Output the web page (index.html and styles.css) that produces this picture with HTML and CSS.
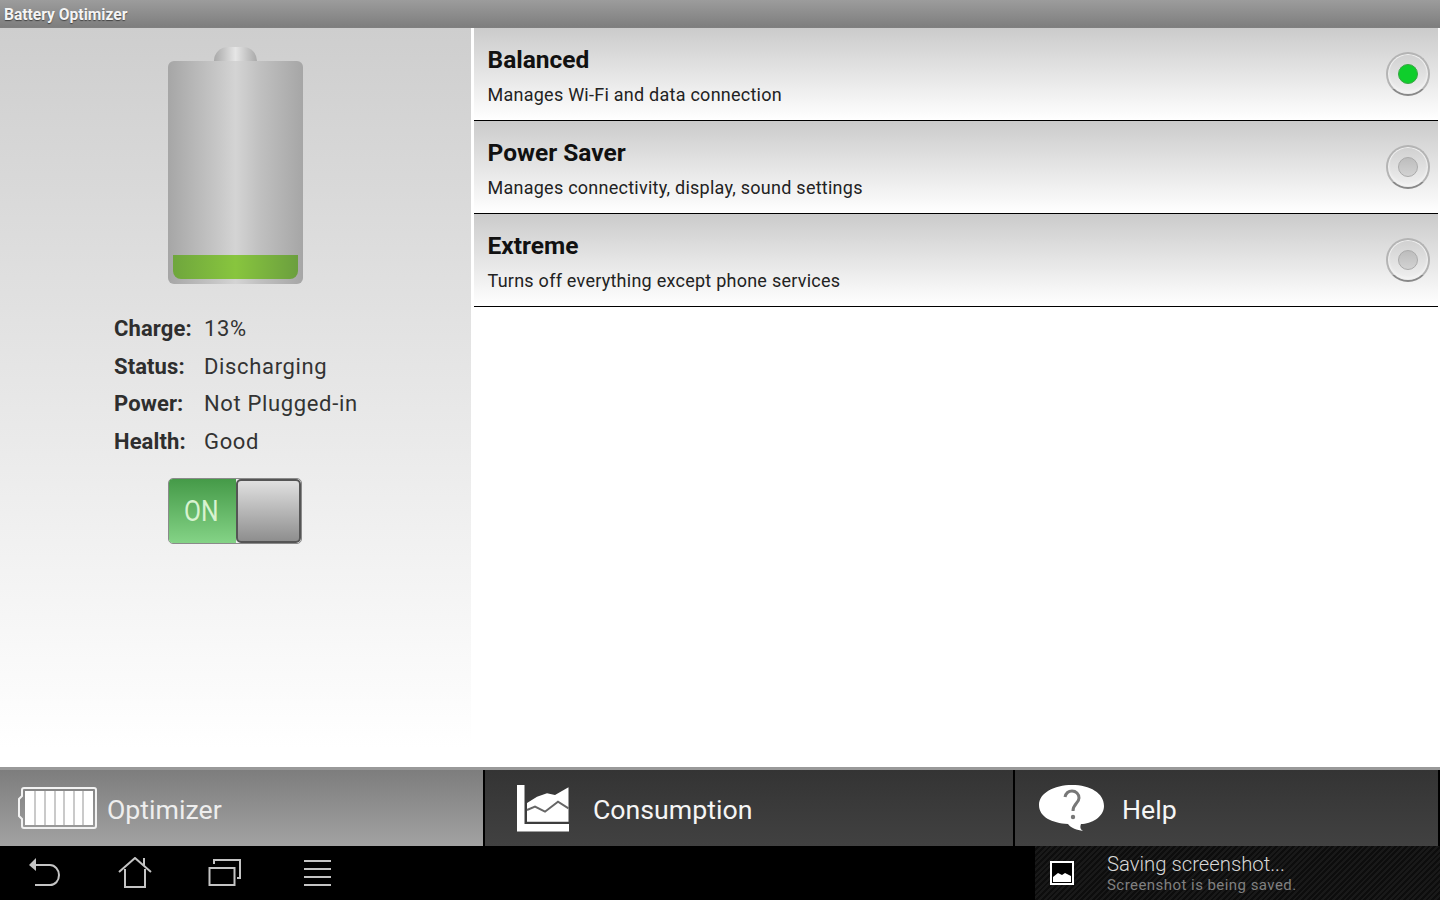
FILE: index.html
```html
<!DOCTYPE html>
<html lang="en">
<head>
    <meta charset="UTF-8">
    <meta name="viewport" content="width=device-width, initial-scale=1.0">
    <title>Battery Optimizer</title>
    <link rel="stylesheet" href="styles.css">
</head>
<body>
    <div class="titlebar"><span class="app-title">Battery Optimizer</span></div>

    <div class="main">
        <div class="side">
            <div class="battery">
                <div class="battery-cap"></div>
                <div class="battery-body">
                    <div class="battery-fill"></div>
                </div>
            </div>
            <div class="stats">
                <div class="stat"><span class="stat-label">Charge:</span><span class="stat-value">13%</span></div>
                <div class="stat"><span class="stat-label">Status:</span><span class="stat-value">Discharging</span></div>
                <div class="stat"><span class="stat-label">Power:</span><span class="stat-value">Not Plugged-in</span></div>
                <div class="stat"><span class="stat-label">Health:</span><span class="stat-value">Good</span></div>
            </div>
            <div class="toggle">
                <div class="toggle-on"><span>ON</span></div>
                <div class="toggle-knob"></div>
            </div>
        </div>

        <div class="modes">
            <div class="mode">
                <div class="mode-text">
                    <div class="mode-name">Balanced</div>
                    <div class="mode-desc">Manages Wi-Fi and data connection</div>
                </div>
                <div class="radio"><div class="radio-dot active"></div></div>
            </div>
            <div class="mode">
                <div class="mode-text">
                    <div class="mode-name">Power Saver</div>
                    <div class="mode-desc">Manages connectivity, display, sound settings</div>
                </div>
                <div class="radio"><div class="radio-dot"></div></div>
            </div>
            <div class="mode">
                <div class="mode-text">
                    <div class="mode-name">Extreme</div>
                    <div class="mode-desc">Turns off everything except phone services</div>
                </div>
                <div class="radio"><div class="radio-dot"></div></div>
            </div>
        </div>
    </div>

    <div class="tabs">
        <div class="tab tab-optimizer">
            <svg class="icon-battery" width="80" height="44" viewBox="0 0 80 44">
                <path d="M6 2H76a2 2 0 0 1 2 2V40a2 2 0 0 1-2 2H6a2 2 0 0 1-2-2V33L1 30V13L4 10V4a2 2 0 0 1 2-2z" fill="none" stroke="#f2f2f2" stroke-width="2"/>
                <rect x="7" y="5" width="68" height="34" fill="#fff"/>
                <path d="M17 5V39M27 5V39M37 5V39M46 5V39M56 5V39M65 5V39" stroke="#b4b4b4" stroke-width="1.4"/>
            </svg>
            <span class="tab-label">Optimizer</span>
        </div>
        <div class="tab tab-consumption">
            <svg width="52" height="48" viewBox="0 0 52 48">
                <path d="M0 1H7.500V40H52V47.500H0z" fill="#fff"/>
                <path d="M10 19L20 12.700L30 9.300L38 11L51.500 3.300V37.700H10z" fill="#fff"/>
                <path d="M10 26L18 22.700L28 27.700L41 17.700L51.500 24.300" fill="none" stroke="#666" stroke-width="2"/>
            </svg>
            <span class="tab-label">Consumption</span>
        </div>
        <div class="tab tab-help">
            <svg width="68" height="48" viewBox="0 0 68 48">
                <path d="M34 1C52 1 66 9 66 22C66 33 53 40 43 40C42 43 42 45 45 47C39 46 33 44 30 40C14 39 1 33 1 21C1 9 16 1 34 1z" fill="#fff"/>
                <path d="M27 13C28 9 31 7 34 7C38 7 41 10 41 14C41 19 35 20 35 27" fill="none" stroke="#777" stroke-width="3"/>
                <circle cx="35" cy="33" r="2.200" fill="#777"/>
            </svg>
            <span class="tab-label">Help</span>
        </div>
    </div>

    <div class="navbar">
        <div class="nav-icons">
            <svg width="34" height="32" viewBox="0 0 34 32">
                <path d="M5 8H22C27 8 31 13 31 18C31 24 27 28 22 28H7" fill="none" stroke="#c4c4c4" stroke-width="2"/>
                <path d="M1 8L8 1V14z" fill="#c4c4c4"/>
            </svg>
            <svg width="34" height="32" viewBox="0 0 34 32">
                <path d="M1 15L17 1L33 15M7 12V30H27V12M26 9V1" fill="none" stroke="#c4c4c4" stroke-width="2"/>
            </svg>
            <svg width="34" height="30" viewBox="0 0 34 30">
                <rect x="1.500" y="10" width="25" height="17" fill="none" stroke="#c4c4c4" stroke-width="2"/>
                <path d="M6 6V2H32V20H29" fill="none" stroke="#c4c4c4" stroke-width="2"/>
            </svg>
            <svg class="nav-menu" width="30" height="28" viewBox="0 0 30 28">
                <path d="M1 2H28M1 10H28M1 18H28M1 26H28" stroke="#c4c4c4" stroke-width="2"/>
            </svg>
        </div>
        <div class="notify">
            <svg width="24" height="24" viewBox="0 0 24 24">
                <rect x="1" y="1" width="22" height="22" fill="#000" stroke="#fff" stroke-width="2"/>
                <path d="M3 21V16L8 12L12 14L15 12L21 15V21z" fill="#fff"/>
            </svg>
            <div class="notify-text">
                <div class="notify-title">Saving screenshot...</div>
                <div class="notify-sub">Screenshot is being saved.</div>
            </div>
        </div>
    </div>
</body>
</html>
```

FILE: styles.css
```css
* {
    box-sizing: border-box;
}

body {
    font-family: Roboto, "Liberation Sans", sans-serif;
    margin: 0;
    width: 1440px;
    height: 900px;
    overflow: hidden;
    display: flex;
    flex-direction: column;
    background-color: white;
}

.titlebar {
    height: 28px;
    flex-shrink: 0;
    padding-left: 4px;
    line-height: 30px;
    background: linear-gradient(#9c9c9c, #7e7e7e);
    border-bottom: 1px solid #808080;
}

.app-title {
    font-size: 15.6px;
    font-weight: 700;
    color: #f4f4f4;
    text-shadow: 0 1px 1px rgba(0, 0, 0, 0.5);
}

.main {
    height: 739px;
    flex-shrink: 0;
    display: flex;
}

.side {
    width: 471px;
    height: 720px;
    flex-shrink: 0;
    padding-top: 19px;
    display: flex;
    flex-direction: column;
    align-items: center;
    background: linear-gradient(#cecece, #ffffff);
}

.battery {
    width: 135px;
    display: flex;
    flex-direction: column;
    align-items: center;
}

.battery-cap {
    width: 43px;
    height: 14px;
    border-radius: 14px 14px 0 0;
    background: linear-gradient(90deg, #a9a9a9, #e6e6e6 50%, #a9a9a9);
}

.battery-body {
    width: 135px;
    height: 223px;
    padding: 0 5px 5px;
    display: flex;
    align-items: flex-end;
    border-radius: 6px;
    background: linear-gradient(90deg, #a6a6a6, #c8c8c8 38%, #d4d4d4 50%, #c0c0c0 68%, #a6a6a6);
}

.battery-fill {
    width: 100%;
    height: 24px;
    border-radius: 0 0 8px 8px;
    background: linear-gradient(90deg, #6fa63d, #88c53e 50%, #6b9f3e);
}

.stats {
    width: 100%;
    margin-top: 26px;
    padding-left: 114px;
}

.stat {
    height: 37.5px;
    line-height: 37.5px;
    display: flex;
    font-size: 22px;
    color: #333;
}

.stat-label {
    width: 90px;
    font-weight: 700;
    letter-spacing: 0.1px;
    color: #2e2e2e;
}

.stat-value {
    letter-spacing: 0.65px;
}

.toggle {
    width: 134px;
    height: 66px;
    margin-top: 18px;
    margin-right: 1px;
    display: flex;
    border-radius: 5px;
    overflow: hidden;
    border: 1px solid #8a8a8a;
}

.toggle-on {
    width: 67px;
    padding-right: 2px;
    display: flex;
    align-items: center;
    justify-content: center;
    background: linear-gradient(#459a48, #84d386);
}

.toggle-on span {
    font-size: 29px;
    color: #d8f3d0;
    transform: scaleX(0.85);
}

.toggle-knob {
    flex: 1;
    border: 2px solid #555;
    border-radius: 5px;
    background: linear-gradient(#e0e0e0, #8e8e8e);
}

.modes {
    width: 964px;
    margin-left: 3px;
}

.mode {
    height: 93px;
    display: flex;
    align-items: center;
    justify-content: space-between;
    padding: 0 8px 0 13.5px;
    border-bottom: 1px solid #000;
    background: linear-gradient(#cbcbcb, #ffffff);
}

.mode-text {
    padding-top: 5px;
}

.mode-name {
    font-size: 24.5px;
    font-weight: 700;
    color: #111;
    line-height: 32px;
}

.mode-desc {
    margin-top: 4px;
    font-size: 18px;
    letter-spacing: 0.25px;
    color: #222;
    line-height: 30px;
}

.radio {
    width: 44px;
    height: 44px;
    margin-bottom: 1px;
    display: flex;
    align-items: center;
    justify-content: center;
    border-radius: 50%;
    border: 2px solid #b4b4b4;
    border-bottom-color: #888;
    box-shadow: inset 0 0 0 1px #efefef, inset 0 -2px 3px #f6f6f6;
    background: linear-gradient(#d0d0d0, #f0f0f0);
}

.radio-dot {
    width: 20px;
    height: 20px;
    border-radius: 50%;
    border: 1px solid #aaa;
    background: linear-gradient(#bdbdbd, #d2d2d2);
}

.radio-dot.active {
    border-color: #3aa544;
    background: #0fce2c;
}

.tabs {
    height: 79px;
    flex-shrink: 0;
    display: flex;
    padding-right: 2px;
    background: #000;
    border-top: 3px solid #999;
}

.tab {
    display: flex;
    align-items: center;
    font-size: 26.7px;
    color: #f5f5f5;
    background: linear-gradient(#343434, #414141);
}

.tab-label {
    margin-top: 4px;
}

.tab-optimizer {
    width: 483px;
    padding-left: 18px;
    gap: 9px;
    color: #eee;
    background: linear-gradient(#7d7d7d, #a2a2a2);
}

.tab-consumption {
    width: 528px;
    margin-left: 2px;
    padding-left: 32px;
    gap: 24px;
}

.tab-help {
    flex: 1;
    margin-left: 2px;
    padding-left: 23px;
    gap: 16px;
}

.navbar {
    height: 54px;
    flex-shrink: 0;
    display: flex;
    justify-content: space-between;
    background: #000;
}

.nav-icons {
    display: flex;
    align-items: center;
    padding-left: 28px;
    gap: 56px;
}

.nav-menu {
    margin-left: 5px;
}

.notify {
    width: 405px;
    display: flex;
    align-items: center;
    padding-left: 15px;
    gap: 33px;
    background: repeating-linear-gradient(135deg, #191919 0, #191919 2px, #0d0d0d 2px, #0d0d0d 4px);
}

.notify-title {
    font-size: 20.3px;
    font-weight: 300;
    color: #d8d8d8;
    line-height: 27px;
    margin-bottom: -2px;
}

.notify-sub {
    font-size: 15px;
    letter-spacing: 0.45px;
    color: #808080;
    line-height: 19px;
}
```
